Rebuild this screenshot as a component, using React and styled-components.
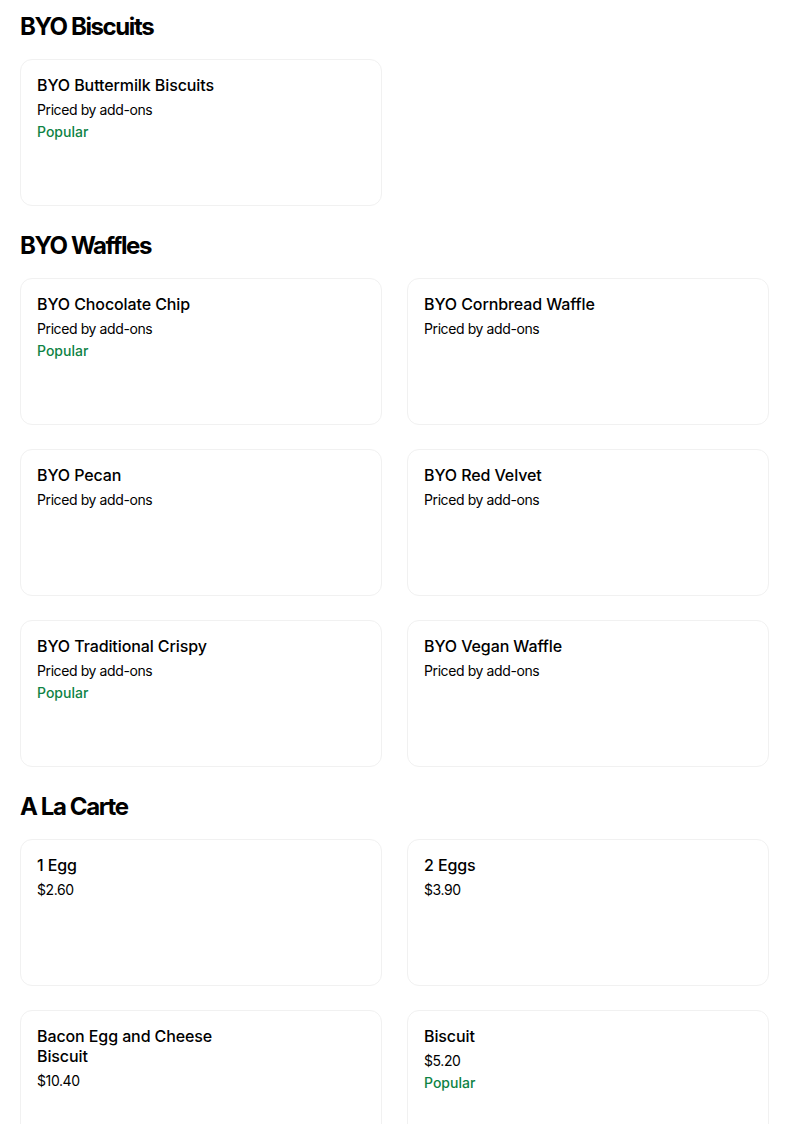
import React from "react";
import styled, { createGlobalStyle } from "styled-components";

const GlobalStyle = createGlobalStyle`
  * { box-sizing: border-box; }
  body {
    margin: 0;
    background: #ffffff;
    color: #000000;
    font-family: Inter, "Noto Sans", Arial, sans-serif;
  }
`;

const SCPage = styled.div`
  width: 749px;
  margin-left: 20px;
  padding-top: 11px;
  display: flex;
  flex-direction: column;
  gap: 24px;
`;

const SCSection = styled.section`
  display: flex;
  flex-direction: column;
  gap: 16px;
`;

const SCHeading = styled.h2`
  margin: 0;
  font-size: 24px;
  line-height: 32px;
  font-weight: 700;
  letter-spacing: -1.4px;
`;

const SCGrid = styled.div`
  display: grid;
  grid-template-columns: 1fr 1fr;
  column-gap: 25px;
  row-gap: 24px;
`;

const SCCard = styled.div`
  height: 147px;
  border: 1px solid #f1f1f1;
  border-radius: 12px;
  padding: 15px 16px;
  display: flex;
`;

const SCInfo = styled.div`
  width: 205px;
  display: flex;
  flex-direction: column;
`;

const SCTitle = styled.div`
  font-size: 16px;
  line-height: 20px;
  font-weight: 500;
  letter-spacing: -0.1px;
`;

const SCSub = styled.div`
  margin-top: 5px;
  font-size: 14px;
  line-height: 20px;
  color: #000000;
  letter-spacing: -0.4px;
`;

const SCPopular = styled.div`
  margin-top: 2px;
  font-size: 14px;
  line-height: 20px;
  font-weight: 500;
  color: #0e8345;
`;

const sections = [
  {
    name: "BYO Biscuits",
    items: [{ title: "BYO Buttermilk Biscuits", sub: "Priced by add-ons", popular: true }],
  },
  {
    name: "BYO Waffles",
    items: [
      { title: "BYO Chocolate Chip", sub: "Priced by add-ons", popular: true },
      { title: "BYO Cornbread Waffle", sub: "Priced by add-ons" },
      { title: "BYO Pecan", sub: "Priced by add-ons" },
      { title: "BYO Red Velvet", sub: "Priced by add-ons" },
      { title: "BYO Traditional Crispy", sub: "Priced by add-ons", popular: true },
      { title: "BYO Vegan Waffle", sub: "Priced by add-ons" },
    ],
  },
  {
    name: "A La Carte",
    items: [
      { title: "1 Egg", sub: "$2.60" },
      { title: "2 Eggs", sub: "$3.90" },
      { title: "Bacon Egg and Cheese Biscuit", sub: "$10.40" },
      { title: "Biscuit", sub: "$5.20", popular: true },
    ],
  },
];

function MenuCard({ item }) {
  return (
    <SCCard>
      <SCInfo>
        <SCTitle>{item.title}</SCTitle>
        <SCSub>{item.sub}</SCSub>
        {item.popular && <SCPopular>Popular</SCPopular>}
      </SCInfo>
    </SCCard>
  );
}

export default function App() {
  return (
    <>
      <GlobalStyle />
      <SCPage>
        {sections.map((section) => (
          <SCSection key={section.name}>
            <SCHeading>{section.name}</SCHeading>
            <SCGrid>
              {section.items.map((item) => (
                <MenuCard key={item.title} item={item} />
              ))}
            </SCGrid>
          </SCSection>
        ))}
      </SCPage>
    </>
  );
}
